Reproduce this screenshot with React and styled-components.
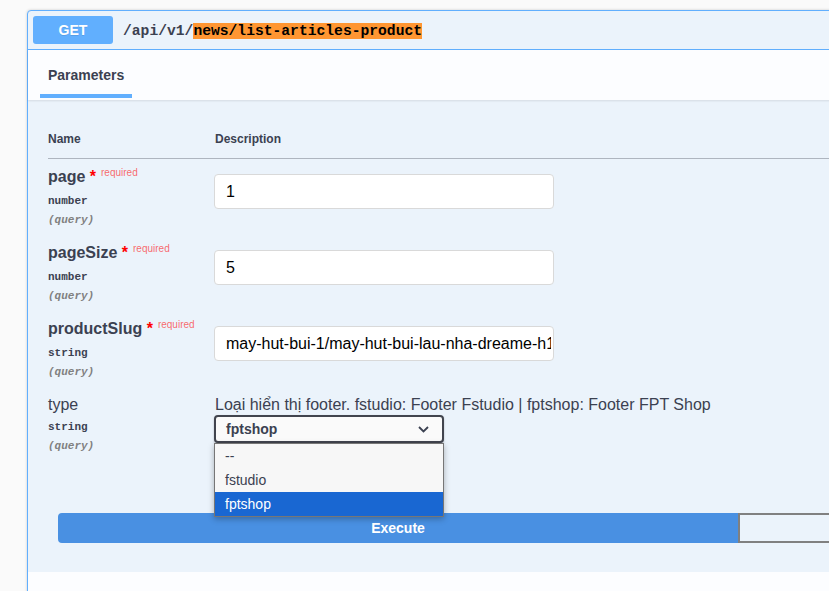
import React from 'react';
import styled, { createGlobalStyle } from 'styled-components';

const GlobalStyle = createGlobalStyle`
  html, body {
    margin: 0;
    padding: 0;
    background: #fafafa;
    overflow: hidden;
  }
  body {
    font-family: "Liberation Sans", Arial, sans-serif;
    color: #3b4151;
  }
`;

const Page = styled.div`
  padding: 10px 0 0 27px;
  height: 591px;
  box-sizing: border-box;
`;

const Opblock = styled.div`
  width: 1420px;
  height: 640px;
  border: 1px solid #61affe;
  border-radius: 4px;
  background: #ebf3fb;
  box-shadow: 0 0 3px rgba(0, 0, 0, 0.19);
  display: flex;
  flex-direction: column;
`;

const Summary = styled.div`
  display: flex;
  align-items: center;
  padding: 5px;
  border-bottom: 1px solid #61affe;
`;

const Method = styled.div`
  width: 80px;
  height: 28px;
  border-radius: 3px;
  background: #61affe;
  color: #fff;
  font-size: 14px;
  font-weight: 700;
  display: flex;
  align-items: center;
  justify-content: center;
  text-shadow: 0 1px 0 rgba(0, 0, 0, 0.1);
`;

const Path = styled.div`
  margin-left: 10px;
  padding-top: 3px;
  font-family: "Liberation Mono", "DejaVu Sans Mono", monospace;
  font-size: 14.67px;
  font-weight: 700;
  color: #3b4151;
  line-height: 19px;
`;

const Highlight = styled.span`
  background: #ff9632;
  color: #000;
`;

const SectionHeader = styled.div`
  height: 50px;
  box-sizing: border-box;
  padding: 0 12px;
  display: flex;
  align-items: flex-start;
  background: #fcfdff;
  box-shadow: 0 1px 2px rgba(0, 0, 0, 0.1);
  position: relative;
  z-index: 1;
  flex-shrink: 0;
`;

const Tab = styled.div`
  padding: 17px 8px 10px;
  font-size: 14px;
  line-height: 17px;
  font-weight: 700;
  color: #3b4151;
  border-bottom: 4px solid #61affe;
`;

const Body = styled.div`
  padding: 20px 20px 29px;
`;

const Grid = styled.div`
  display: grid;
  grid-template-columns: 166px 1fr;
`;

const TableHead = styled(Grid)`
  padding: 12px 0 12px;
  border-bottom: 1px solid rgba(59, 65, 81, 0.35);
  font-size: 12px;
  line-height: 14px;
  font-weight: 700;

  & > div:last-child {
    padding-left: 1px;
  }
`;

const ParamRow = styled(Grid)`
  padding: 8px 0 10px;
  height: 76px;
  box-sizing: border-box;
`;

const NameCol = styled.div`
  display: flex;
  flex-direction: column;
`;

const Name = styled.div`
  font-size: 16px;
  line-height: 20px;
  font-weight: ${(p) => (p.$required ? 700 : 400)};
  color: #3b4151;
  white-space: nowrap;
`;

const Star = styled.span`
  color: red;
`;

const RequiredTag = styled.span`
  color: rgba(255, 0, 0, 0.6);
  font-size: 10px;
  font-weight: 400;
  padding: 5px;
  position: relative;
  top: -6px;
`;

const TypeText = styled.div`
  margin-top: 5px;
  font-family: "Liberation Mono", "DejaVu Sans Mono", monospace;
  font-size: 11px;
  line-height: 14px;
  font-weight: 600;
  color: ${(p) => (p.$muted ? '#808080' : '#3b4151')};
  font-style: ${(p) => (p.$muted ? 'italic' : 'normal')};
`;

const DescCol = styled.div`
  padding-top: ${(p) => (p.$offset ? '7px' : '0')};
`;

const Description = styled.div`
  padding-left: 1px;
  font-size: 16px;
  line-height: 20px;
  color: #3b4151;
  white-space: nowrap;
`;

const TextInput = styled.input`
  width: 340px;
  height: 35px;
  box-sizing: border-box;
  border: 1px solid #d9d9d9;
  border-radius: 4px;
  background: #fff;
  padding: 0 2px 0 11px;
  font-family: "Liberation Sans", Arial, sans-serif;
  font-size: 16px;
  color: #000;
  outline: none;
  display: block;
`;

const SelectWrap = styled.div`
  position: relative;
  width: 230px;
`;

const SelectBox = styled.div`
  height: 28px;
  box-sizing: border-box;
  border: 2px solid #41444e;
  border-radius: 4px;
  background: #fafafa;
  box-shadow: 0 1px 2px rgba(0, 0, 0, 0.25);
  display: flex;
  align-items: center;
  justify-content: space-between;
  padding: 0 13px 0 10px;
  font-size: 14px;
  font-weight: 700;
  color: #3b4151;
`;

const OptionList = styled.div`
  position: absolute;
  top: 28px;
  left: 0;
  width: 230px;
  box-sizing: border-box;
  border: 1px solid #767676;
  background: #f7f7f7;
  box-shadow: 0 2px 6px rgba(0, 0, 0, 0.28);
  z-index: 5;
`;

const Option = styled.div`
  height: 24px;
  line-height: 24px;
  padding: 0 10px;
  font-size: 14px;
  color: ${(p) => (p.$selected ? '#fff' : '#3b4151')};
  background: ${(p) => (p.$selected ? '#1967d2' : 'transparent')};
`;

const ButtonRow = styled.div`
  display: flex;
  margin: 50px 10px 0;
`;

const ExecuteButton = styled.button`
  width: 50%;
  height: 30px;
  border: 2px solid #4990e2;
  border-radius: 4px 0 0 4px;
  background: #4990e2;
  color: #fff;
  font-family: "Liberation Sans", Arial, sans-serif;
  font-size: 14px;
  font-weight: 700;
  padding: 0;
`;

const ClearButton = styled.button`
  width: 50%;
  height: 30px;
  border: 2px solid #808080;
  border-radius: 0 4px 4px 0;
  background: transparent;
  padding: 0;
`;

const FooterHeader = styled.div`
  flex: 1;
  background: #fcfdff;
`;

const Chevron = () => (
  <svg width="11" height="7" viewBox="0 0 11 7">
    <path d="M1 1l4.5 4.5L10 1" fill="none" stroke="#3b4151" strokeWidth="1.8" />
  </svg>
);

const params = [
  { name: 'page', type: 'number', value: '1' },
  { name: 'pageSize', type: 'number', value: '5' },
  { name: 'productSlug', type: 'string', value: 'may-hut-bui-1/may-hut-bui-lau-nha-dreame-h10-pro' },
];

const options = ['--', 'fstudio', 'fptshop'];

export default function App() {
  return (
    <Page>
      <GlobalStyle />
      <Opblock>
        <Summary>
          <Method>GET</Method>
          <Path>
            /api/v1/<Highlight>news/list-articles-product</Highlight>
          </Path>
        </Summary>
        <SectionHeader>
          <Tab>Parameters</Tab>
        </SectionHeader>
        <Body>
          <TableHead>
            <div>Name</div>
            <div>Description</div>
          </TableHead>
          {params.map((p) => (
            <ParamRow key={p.name}>
              <NameCol>
                <Name $required>
                  {p.name}
                  <Star>&nbsp;*</Star>
                  <RequiredTag>required</RequiredTag>
                </Name>
                <TypeText>{p.type}</TypeText>
                <TypeText $muted>(query)</TypeText>
              </NameCol>
              <DescCol $offset>
                <TextInput defaultValue={p.value} />
              </DescCol>
            </ParamRow>
          ))}
          <ParamRow>
            <NameCol>
              <Name>type</Name>
              <TypeText>string</TypeText>
              <TypeText $muted>(query)</TypeText>
            </NameCol>
            <DescCol>
              <Description>
                Loại hiển thị footer. fstudio: Footer Fstudio | fptshop: Footer FPT Shop
              </Description>
              <SelectWrap>
                <SelectBox>
                  <span>fptshop</span>
                  <Chevron />
                </SelectBox>
                <OptionList>
                  {options.map((o) => (
                    <Option key={o} $selected={o === 'fptshop'}>
                      {o}
                    </Option>
                  ))}
                </OptionList>
              </SelectWrap>
            </DescCol>
          </ParamRow>
          <ButtonRow>
            <ExecuteButton>Execute</ExecuteButton>
            <ClearButton />
          </ButtonRow>
        </Body>
        <FooterHeader />
      </Opblock>
    </Page>
  );
}
